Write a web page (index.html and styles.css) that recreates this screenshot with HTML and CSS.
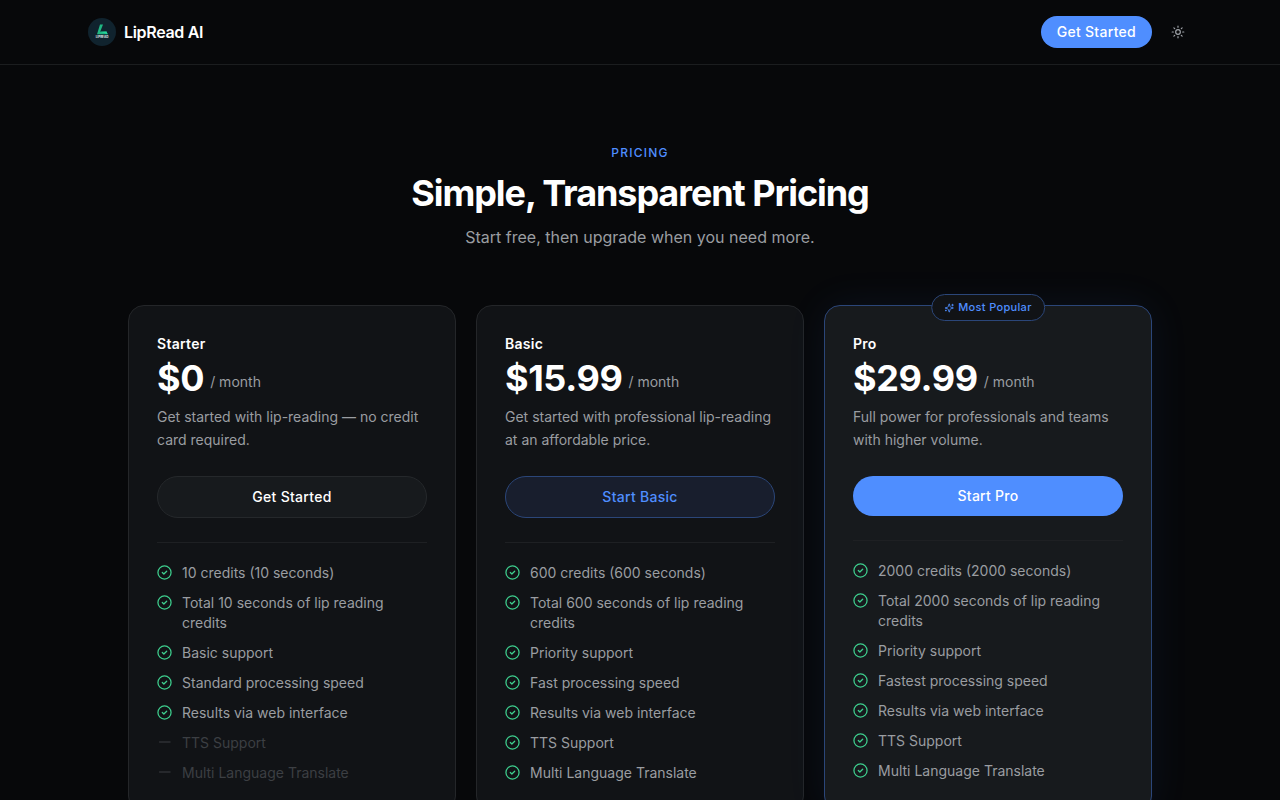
FILE: index.html
```html
<!DOCTYPE html>
<html lang="en">

<head>
    <meta charset="UTF-8">
    <meta name="viewport" content="width=device-width, initial-scale=1.0">
    <title>LipRead AI - Pricing</title>
    <link rel="stylesheet" href="styles.css">
</head>

<body>

    <!-- Shared icons -->
    <svg class="sprite" aria-hidden="true">
        <symbol id="icon-check" viewBox="0 0 24 24">
            <circle cx="12" cy="12" r="10.5" />
            <path d="M8.5 12l2.5 2.5 4.5-4.5" />
        </symbol>
        <symbol id="icon-minus" viewBox="0 0 24 24">
            <path d="M4 11.200h17" />
        </symbol>
    </svg>

    <header class="site-header">
        <div class="nav">
            <a class="brand" href="#">
                <svg class="brand-logo" viewBox="0 0 28 28" aria-hidden="true">
                    <circle cx="14" cy="14" r="14" fill="#10232e" />
                    <path d="M12 6.500h3l-2.800 7.200 6.300-.2 1.200 2.700H9z" fill="#1fb783" />
                    <path d="M12.200 13.700l6.300-.2 1.200 2.700z" fill="#27d69a" />
                    <text x="14" y="20.400" text-anchor="middle" class="logo-text">LIPREAD</text>
                </svg>
                <span>LipRead AI</span>
            </a>
            <div class="nav-actions">
                <button type="button" class="btn nav-button">Get Started</button>
                <button type="button" class="theme-toggle" aria-label="Toggle theme">
                    <svg viewBox="0 0 24 24" aria-hidden="true">
                        <circle cx="12" cy="12" r="4" />
                        <path d="M12 2v2M12 20v2M4.930 4.930l1.410 1.410M17.660 17.660l1.410 1.410M2 12h2M20 12h2M6.340 17.660l-1.410 1.410M19.070 4.930l-1.410 1.410" />
                    </svg>
                </button>
            </div>
        </div>
    </header>

    <main class="pricing">
        <div class="section-header">
            <p class="eyebrow">PRICING</p>
            <h1>Simple, Transparent Pricing</h1>
            <p class="subtitle">Start free, then upgrade when you need more.</p>
        </div>

        <div class="plans">
            <section class="card">
                <h2>Starter</h2>
                <p class="price"><strong>$0</strong><span>/ month</span></p>
                <p class="description">Get started with lip-reading — no credit card required.</p>
                <button type="button" class="btn btn-plan btn-outline">Get Started</button>
                <ul class="features">
                    <li><svg><use href="#icon-check" /></svg>10 credits (10 seconds)</li>
                    <li><svg><use href="#icon-check" /></svg>Total 10 seconds of lip reading credits</li>
                    <li><svg><use href="#icon-check" /></svg>Basic support</li>
                    <li><svg><use href="#icon-check" /></svg>Standard processing speed</li>
                    <li><svg><use href="#icon-check" /></svg>Results via web interface</li>
                    <li class="missing"><svg><use href="#icon-minus" /></svg>TTS Support</li>
                    <li class="missing"><svg><use href="#icon-minus" /></svg>Multi Language Translate</li>
                </ul>
            </section>

            <section class="card">
                <h2>Basic</h2>
                <p class="price"><strong>$15.99</strong><span>/ month</span></p>
                <p class="description">Get started with professional lip-reading at an affordable price.</p>
                <button type="button" class="btn btn-plan btn-tinted">Start Basic</button>
                <ul class="features">
                    <li><svg><use href="#icon-check" /></svg>600 credits (600 seconds)</li>
                    <li><svg><use href="#icon-check" /></svg>Total 600 seconds of lip reading credits</li>
                    <li><svg><use href="#icon-check" /></svg>Priority support</li>
                    <li><svg><use href="#icon-check" /></svg>Fast processing speed</li>
                    <li><svg><use href="#icon-check" /></svg>Results via web interface</li>
                    <li><svg><use href="#icon-check" /></svg>TTS Support</li>
                    <li><svg><use href="#icon-check" /></svg>Multi Language Translate</li>
                </ul>
            </section>

            <section class="card card-popular">
                <div class="badge">
                    <svg viewBox="0 0 24 24" aria-hidden="true">
                        <path d="M9.937 15.500A2 2 0 0 0 8.500 14.063l-6.135-1.582a.5.5 0 0 1 0-.962L8.500 9.936A2 2 0 0 0 9.937 8.500l1.582-6.135a.5.5 0 0 1 .963 0L14.063 8.500A2 2 0 0 0 15.500 9.937l6.135 1.581a.5.5 0 0 1 0 .964L15.500 14.063a2 2 0 0 0-1.437 1.437l-1.582 6.135a.5.5 0 0 1-.963 0z" />
                        <path d="M20 3v4M22 5h-4M4 17v2M5 18H3" />
                    </svg>
                    <span>Most Popular</span>
                </div>
                <h2>Pro</h2>
                <p class="price"><strong>$29.99</strong><span>/ month</span></p>
                <p class="description">Full power for professionals and teams with higher volume.</p>
                <button type="button" class="btn btn-plan">Start Pro</button>
                <ul class="features">
                    <li><svg><use href="#icon-check" /></svg>2000 credits (2000 seconds)</li>
                    <li><svg><use href="#icon-check" /></svg>Total 2000 seconds of lip reading credits</li>
                    <li><svg><use href="#icon-check" /></svg>Priority support</li>
                    <li><svg><use href="#icon-check" /></svg>Fastest processing speed</li>
                    <li><svg><use href="#icon-check" /></svg>Results via web interface</li>
                    <li><svg><use href="#icon-check" /></svg>TTS Support</li>
                    <li><svg><use href="#icon-check" /></svg>Multi Language Translate</li>
                </ul>
            </section>
        </div>
    </main>

</body>

</html>
```
FILE: styles.css
```css
* {
    box-sizing: border-box;
    margin: 0;
    padding: 0;
}

body {
    font-family: Inter, "Liberation Sans", sans-serif;
    font-size: 14px;
    line-height: 20px;
    background-color: #07080a;
    color: #ffffff;
}

svg {
    fill: none;
    stroke: currentColor;
    stroke-width: 2;
    stroke-linecap: round;
    stroke-linejoin: round;
}

.sprite {
    position: absolute;
    width: 0;
    height: 0;
}

/* Header */
.site-header {
    border-bottom: 1px solid #1b1d1f;
}

.nav {
    max-width: 1152px;
    height: 64px;
    margin: 0 auto;
    padding: 0 24px;
    display: flex;
    align-items: center;
    justify-content: space-between;
}

.brand {
    display: flex;
    align-items: center;
    gap: 8px;
    color: #ffffff;
    font-size: 16px;
    font-weight: 600;
    letter-spacing: -0.02em;
    text-decoration: none;
}

.brand-logo {
    width: 28px;
    height: 28px;
    stroke: none;
}

.logo-text {
    font-size: 3px;
    font-weight: 700;
    letter-spacing: 0;
    fill: #e4ecef;
}

.nav-actions {
    display: flex;
    align-items: center;
    gap: 12px;
}

.btn {
    border: none;
    border-radius: 999px;
    background-color: #4f8eff;
    color: #ffffff;
    font-family: inherit;
    font-size: 14px;
    font-weight: 500;
    line-height: 20px;
    letter-spacing: 0.02em;
    cursor: pointer;
}

.nav-button {
    padding: 6px 16px;
}

.theme-toggle {
    width: 28px;
    height: 28px;
    display: flex;
    align-items: center;
    justify-content: center;
    border: none;
    background: none;
    color: #a1a5ab;
    cursor: pointer;
}

.theme-toggle svg {
    width: 14px;
    height: 14px;
}

/* Pricing section */
.pricing {
    max-width: 1072px;
    margin: 0 auto;
    padding: 80px 24px;
}

.section-header {
    display: flex;
    flex-direction: column;
    gap: 12px;
    margin-bottom: 56px;
    text-align: center;
}

.eyebrow {
    color: #4f8eff;
    font-size: 12px;
    font-weight: 500;
    line-height: 16px;
    letter-spacing: 0.1em;
}

h1 {
    font-size: 36px;
    font-weight: 700;
    line-height: 40px;
    letter-spacing: -0.03em;
}

.subtitle {
    color: #9a9da1;
    font-size: 16px;
    line-height: 24px;
}

.plans {
    display: grid;
    grid-template-columns: repeat(3, 1fr);
    gap: 20px;
}

.card {
    position: relative;
    padding: 28px;
    border: 1px solid #242629;
    border-radius: 16px;
    background-color: #111316;
}

.card-popular {
    border-color: #2b4679;
    background-color: #171a1d;
    box-shadow: 0 0 40px rgba(79, 142, 255, 0.08);
}

.badge {
    position: absolute;
    top: -12px;
    left: 50%;
    transform: translateX(-50%);
    display: flex;
    align-items: center;
    gap: 4px;
    padding: 4px 12px;
    border: 1px solid #2b4679;
    border-radius: 999px;
    background-color: #111316;
    color: #4f8eff;
    font-size: 11px;
    font-weight: 500;
    line-height: 17px;
    letter-spacing: 0.03em;
    white-space: nowrap;
}

.badge svg {
    width: 10px;
    height: 10px;
}

.card h2 {
    font-size: 14px;
    font-weight: 600;
    line-height: 20px;
    letter-spacing: 0.02em;
}

.price {
    display: flex;
    align-items: flex-end;
    gap: 6px;
    margin: 4px 0 7px;
    color: #9a9da1;
}

.price strong {
    color: #ffffff;
    font-size: 36px;
    font-weight: 700;
    line-height: 40px;
    letter-spacing: -0.01em;
}

.price span {
    padding-bottom: 6px;
}

.description {
    padding-bottom: 1px;
    color: #9a9da1;
    line-height: 23px;
}

.btn-plan {
    width: 100%;
    margin: 24px 0;
    padding: 10px 16px;
}

.btn-outline {
    border: 1px solid #25282b;
    background-color: #171a1d;
}

.btn-tinted {
    border: 1px solid #2b4679;
    background-color: #181e2d;
    color: #4f8eff;
}

.features {
    display: flex;
    flex-direction: column;
    gap: 10px;
    padding-top: 20px;
    border-top: 1px solid #1e2023;
    color: #9a9da1;
    list-style: none;
}

.features li {
    display: flex;
    align-items: flex-start;
    gap: 10px;
}

.features svg {
    flex: none;
    width: 15px;
    height: 15px;
    margin-top: 2px;
    color: #3ecf8e;
}

.features .missing,
.features .missing svg {
    color: #3c3f43;
}

.features .missing svg {
    stroke-width: 1.6;
}

@media (max-width: 860px) {
    .plans {
        grid-template-columns: 1fr;
    }
}
```
